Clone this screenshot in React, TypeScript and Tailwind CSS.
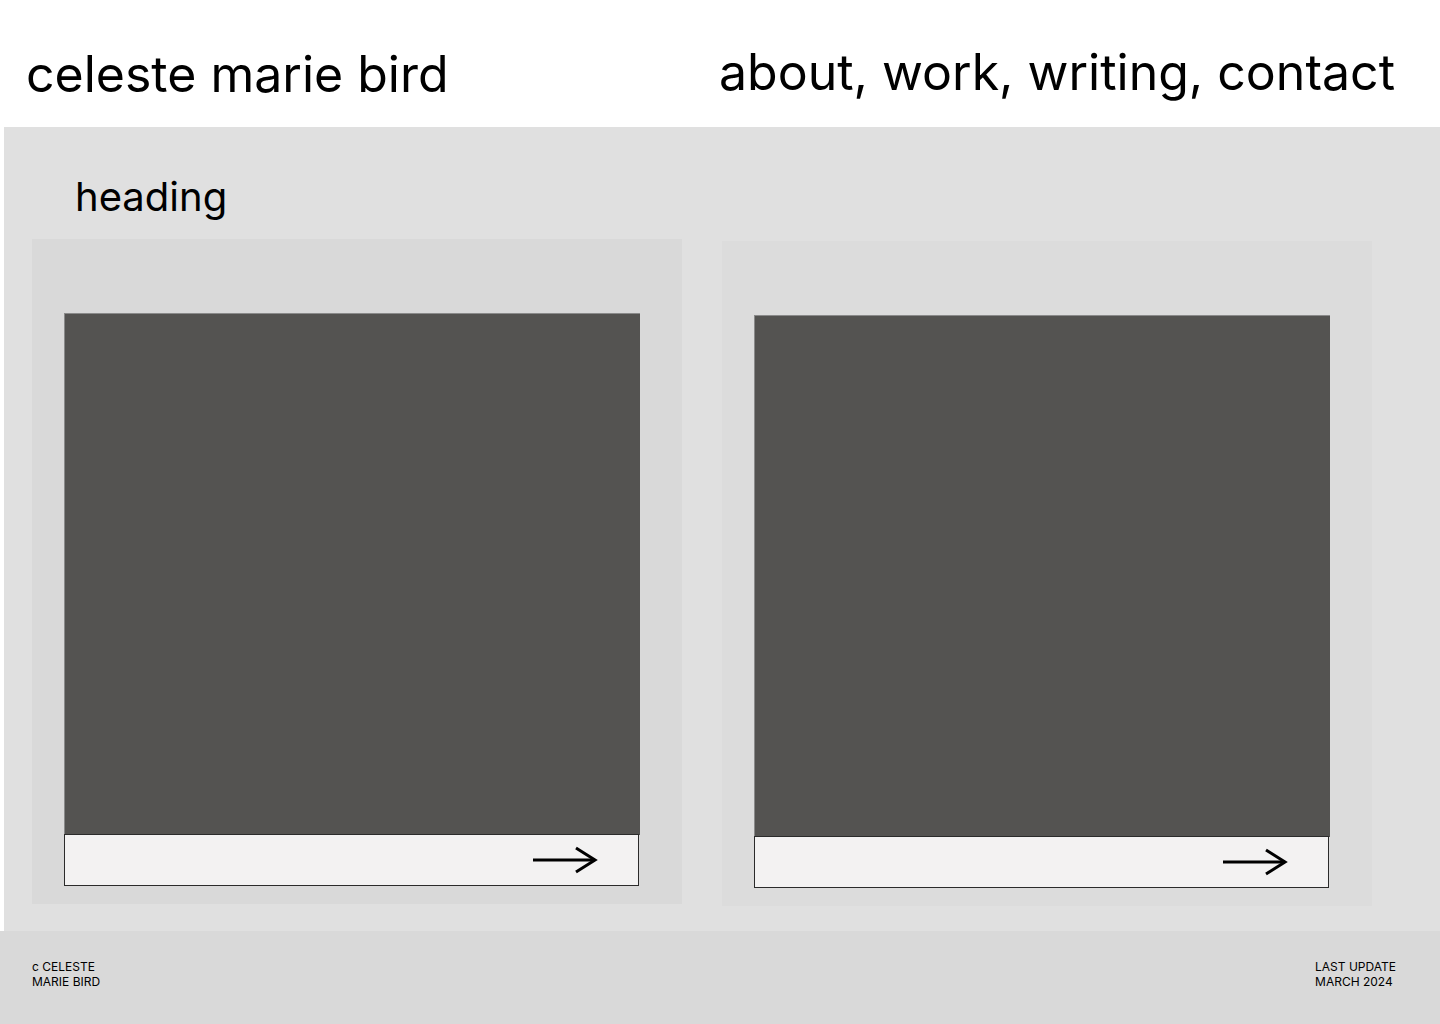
const Arrow = () => (
  <svg width="66" height="28" viewBox="0 0 66 28" fill="none" stroke="currentColor" strokeWidth={3}>
    <path d="M1 14h62" />
    <path d="M44 2l19 12-19 12" />
  </svg>
);

const Card = ({ shift }: { shift?: boolean }) => (
  <div className={`w-[650px] h-[665px] ${shift ? "mt-[2px] bg-[#dcdcdc]" : "bg-[#d9d9d9]"} pt-[74px] pl-[32px]`}>
    <div className="w-[576px] h-[522px] bg-[#545351] border-t border-l border-[#8a8a8a]" />
    <div className="w-[575px] h-[52px] -mt-px bg-[#f3f2f2] border border-[#2b2b2b] flex items-center justify-end pr-[40px]">
      <Arrow />
    </div>
  </div>
);

export default function App() {
  return (
    <div className="w-[1440px] h-[1024px] bg-white flex flex-col font-['Inter',sans-serif] text-black">
      <header className="h-[127px] flex justify-between">
        <h1 className="pl-[26px] pt-[44px] text-[50px] leading-[1.21] font-normal">celeste marie bird</h1>
        <nav className="pr-[45px] pt-[42px] text-[50px] leading-[1.21]">about, work, writing, contact</nav>
      </header>
      <main className="ml-[4px] h-[804px] bg-[#e0e0e0]">
        <h2 className="pl-[71px] pt-[46px] text-[40px] leading-[1.21]">heading</h2>
        <div className="flex gap-[40px] pl-[28px] mt-[18px]">
          <Card />
          <Card shift />
        </div>
      </main>
      <footer className="flex-1 bg-[#d9d9d9] flex justify-between px-[32px] pt-[28px] text-[12px] leading-[15px]">
        <p>c CELESTE<br />MARIE BIRD</p>
        <p className="pr-[12px]">LAST UPDATE<br />MARCH 2024</p>
      </footer>
    </div>
  );
}
